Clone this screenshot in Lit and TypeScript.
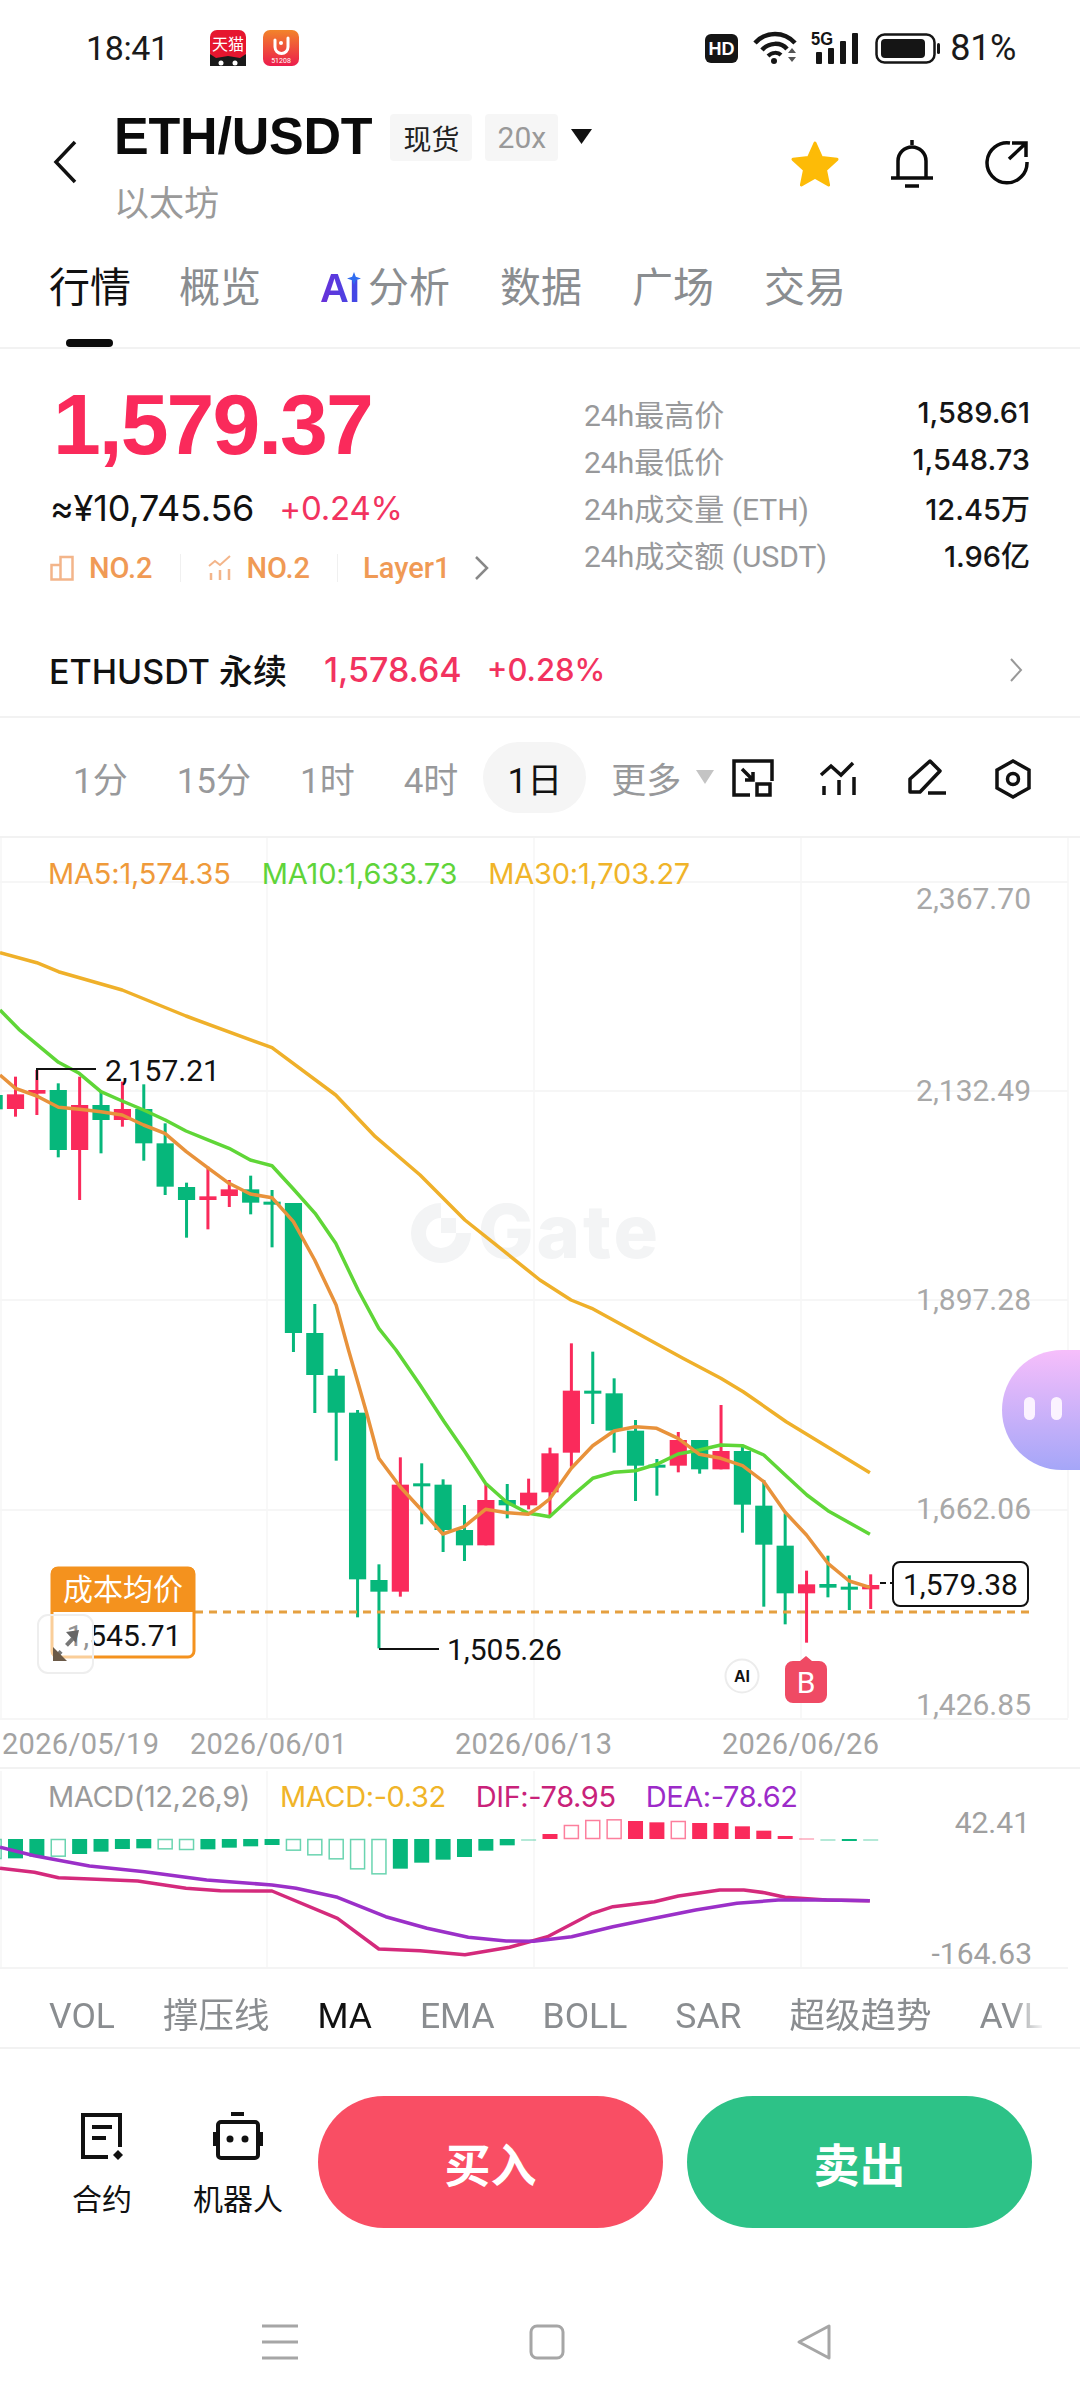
import { LitElement, html, css, svg } from "lit";
import { customElement } from "lit/decorators.js";

const RED = "#FA2A5B";
const GREEN = "#06B77B";
const xAt = (k: number) => 15.5 + 21.38 * (k - 1);

type C = [number, number, number, number, number];
const z3 = (a: number[], r = 0): C => [900 + a[0] / 3, 900 + a[1] / 3, 900 + a[2] / 3, 900 + a[3] / 3, r];
const z4 = (a: number[], r = 0): C => [1350 + a[0] / 3, 1350 + a[1] / 3, 1350 + a[2] / 3, 1350 + a[3] / 3, r];
const z5 = (a: number[], r = 0): C => [1300 + a[0] / 3, 1300 + a[1] / 3, 1300 + a[2] / 3, 1300 + a[3] / 3, r];

const candles: C[] = [
  z3([560, 640, 585, 628]),
  z3([530, 650, 583, 627], 1),
  z3([510, 645, 570, 581], 1),
  z3([550, 772, 570, 750]),
  z3([530, 900, 615, 750], 1),
  z3([575, 760, 615, 660]),
  z3([545, 680, 627, 660], 1),
  z3([553, 782, 627, 730]),
  z3([670, 885, 730, 860]),
  z3([848, 1013, 861, 900]),
  z3([800, 988, 889, 900], 1),
  z3([840, 921, 868, 888], 1),
  z3([827, 943, 868, 908]),
  z3([870, 1042, 905, 911]),
  [1203, 1352, 1203, 1333, 0],
  [1304, 1413, 1333, 1375, 0],
  z4([57, 332, 77, 188]),
  z4([180, 802, 188, 688]),
  z4([643, 895, 690, 725]),
  z4([322, 740, 404, 725], 1),
  z4([340, 523, 400, 407]),
  z4([388, 606, 404, 540]),
  z4([465, 633, 540, 586]),
  z4([400, 586, 450, 586], 1),
  z4([402, 505, 450, 466]),
  z4([386, 478, 428, 466], 1),
  z5([443, 650, 460, 577], 1),
  z5([130, 500, 272, 458], 1),
  z5([155, 372, 272, 278]),
  z5([235, 458, 280, 392]),
  z5([360, 603, 392, 497]),
  z5([477, 587, 494, 500]),
  z5([396, 517, 420, 497], 1),
  z5([420, 521, 420, 508]),
  z5([315, 508, 453, 508], 1),
  z5([435, 698, 453, 614]),
  z5([540, 920, 617, 734]),
  z5([640, 973, 737, 880]),
  z5([812, 1028, 853, 880], 1),
  z5([767, 892, 852, 863]),
  z5([826, 930, 860, 868]),
  z5([823, 927, 855, 868], 1),
];

const pts = (base: number, ox: number, a: number[][]) =>
  a.map(([x, y]) => `${(ox + x / 2.904).toFixed(1)},${(base + y / 3).toFixed(1)}`).join(" ");

const ma30 =
  pts(900, 0, [[0, 158], [107, 188], [170, 215], [355, 270], [540, 348], [790, 443], [975, 585], [1090, 710], [1220, 825], [1350, 960], [1568, 1140]]) +
  " " + pts(1300, 540, [[90, 0], [150, 25], [415, 175], [525, 235], [590, 275], [715, 365], [958, 518]]);
const ma10 =
  pts(900, 0, [[0, 330], [55, 388], [170, 487], [230, 520], [293, 575], [355, 603], [417, 630], [480, 660], [540, 693], [600, 718], [665, 745], [727, 780], [790, 797], [850, 865], [915, 940], [975, 1030], [1040, 1170], [1100, 1285], [1150, 1350]]) +
  " " + pts(1350, 0, [[1220, 105], [1290, 215], [1350, 305], [1410, 400], [1470, 455], [1534, 490], [1568, 495]]) +
  " " + pts(1300, 540, [[28, 650], [91, 590], [153, 535], [215, 517], [277, 512], [339, 493], [401, 462], [463, 450], [525, 435], [588, 437], [650, 465], [712, 525], [775, 585], [836, 632], [958, 703]]);
const ma5 =
  pts(900, 0, [[0, 525], [45, 565], [107, 588], [170, 622], [231, 628], [293, 635], [355, 645], [417, 675], [479, 700], [541, 755], [603, 803], [665, 850], [727, 882], [790, 893], [852, 965], [914, 1080], [976, 1215], [1012, 1350]]) +
  " " + pts(1350, 0, [[1040, 100], [1065, 190], [1100, 325], [1162, 410], [1224, 480], [1286, 552], [1348, 530], [1410, 478], [1472, 488], [1534, 493]]) +
  " " + pts(1300, 540, [[0, 620], [28, 597], [91, 505], [153, 437], [215, 393], [277, 380], [339, 385], [401, 415], [463, 463], [525, 475], [588, 497], [650, 545], [712, 637], [774, 705], [836, 790], [898, 843], [958, 862]]);

// MACD bars: [zoomY, kind] 0 filled, 1 hollow, 2 faint
const bars: [number, number][] = [
  [357, 1], [355, 0], [350, 0], [350, 1], [342, 0], [335, 0], [327, 0], [325, 0], [328, 1], [330, 1], [328, 0], [323, 0], [319, 0], [315, 0],
  [332, 1], [346, 1], [358, 1], [388, 1], [403, 1], [386, 0], [368, 0], [359, 0], [351, 0], [332, 0], [316, 0], [300, 2],
  [282, 0], [255, 1], [240, 1], [238, 1], [243, 0], [247, 0], [243, 1], [249, 0], [249, 0], [259, 0], [272, 0], [288, 0], [294, 2], [299, 2], [301, 0], [299, 2],
];
const zero = 1839;
const linePts = (a: number[][]) => a.map(([x, y]) => `${(x / 1.452).toFixed(1)},${(1740 + y / 3).toFixed(1)}`).join(" ");
const dea = linePts([[0, 322], [50, 347], [130, 378], [210, 395], [300, 420], [395, 435], [430, 445], [490, 472], [560, 530], [620, 565], [680, 592], [735, 603], [775, 604], [830, 590], [890, 560], [950, 535], [1010, 510], [1070, 490], [1130, 480], [1200, 480], [1263, 482]]);
const dif = linePts([[0, 385], [50, 397], [85, 413], [140, 418], [200, 423], [270, 445], [320, 452], [395, 453], [490, 535], [550, 627], [610, 632], [675, 644], [740, 622], [795, 590], [860, 520], [890, 500], [950, 485], [985, 468], [1045, 450], [1080, 450], [1110, 458], [1140, 472], [1200, 480], [1263, 482]]);

const vGrid = [1, 267, 534, 801, 1068];

@customElement("app-root")
export class AppRoot extends LitElement {
  static styles = css`
    :host {
      display: block;
      width: 1080px;
      height: 2408px;
      background: #fff;
      overflow: hidden;
      color: #111;
      font-family: Roboto, "Noto Sans CJK SC", sans-serif;
    }
    svg { display: block; flex: none; overflow: visible; }
    .status { height: 96px; display: flex; align-items: center; padding-left: 86px; }
    .time { font-size: 34px; letter-spacing: -0.4px; color: #1a1a1a; }
    .apps { display: flex; gap: 17px; margin-left: 41px; }
    .status-right { margin-left: auto; display: flex; align-items: center; padding-right: 64px; }
    .pct { font-size: 36px; letter-spacing: -0.4px; margin-left: 9px; color: #1a1a1a; }
    .ml15 { margin-left: 15px; } .ml12 { margin-left: 12px; } .ml17 { margin-left: 16px; }

    .header { height: 134px; display: flex; padding: 0 50px 0 53px; }
    .back { margin-top: 44px; }
    .head-col { margin-left: 37px; padding-top: 12px; }
    .title-row { display: flex; align-items: flex-start; }
    .title { font: 700 52px/56px "Liberation Sans", sans-serif; letter-spacing: -0.2px; color: #0b0b0b; }
    .chip { height: 47px; margin-top: 6px; border-radius: 4px; background: #f6f6f6; display: flex; align-items: center; justify-content: center; font-size: 28px; }
    .chip.spot { width: 82px; margin-left: 18px; color: #222; }
    .chip.lev { width: 73px; margin-left: 13px; color: #999; font-size: 30px; }
    .caret { margin: 21px 0 0 13px; }
    .sub { font-size: 35px; line-height: 40px; margin-top: 21px; color: #9a9a9a; }
    .head-icons { margin-left: auto; display: flex; align-items: flex-start; padding-top: 43px; gap: 50px; }

    .tabs { height: 119px; border-bottom: 2px solid #f2f2f2; box-sizing: border-box; display: flex; padding-left: 49px; gap: 50px; }
    .tab { position: relative; font-size: 41px; line-height: 58px; padding-top: 29px; color: #8a8d90; display: flex; align-items: flex-start; white-space: nowrap; }
    .tab.on { color: #111; }
    .tab.on::after { content: ""; position: absolute; left: 17px; top: 109px; width: 47px; height: 8px; border-radius: 4px; background: #0b0b0b; }
    .tab:nth-child(2) { margin-left: -2px; }
    .tab.with-ai { padding-left: 9px; }
    .ai { font: 700 40px/58px "Liberation Sans", sans-serif; width: 42px; margin-right: 6px; background: linear-gradient(90deg, #6a2fd8, #3d4de8); -webkit-background-clip: text; background-clip: text; color: transparent; }
    .ai-star { position: absolute; left: 36px; top: 42px; }

    .summary { height: 274px; display: flex; padding: 0 50px 0 50px; box-sizing: border-box; }
    .left { width: 534px; }
    .price { font: 700 86px/90px "Liberation Sans", sans-serif; letter-spacing: -2px; color: #FA2A5B; margin: 30px 0 0 3px; }
    .fiat { display: flex; align-items: center; margin-top: 19px; height: 40px; font-family: Inter, sans-serif; font-size: 36px; gap: 25px; letter-spacing: -0.2px; }
    .up { color: #F2335F; font-size: 33px; }
    .tags { display: flex; align-items: center; margin-top: 20px; height: 40px; color: #F09A55; font-size: 29px; font-weight: 500; }
    .tag { display: flex; align-items: center; gap: 15px; }
    .sep { width: 1px; height: 28px; background: #f0f0f0; margin: 0 27px; }
    .layer { margin-left: -2px; }
    .tag-more { margin-left: 24px; }
    .right { flex: 1; padding-top: 40px; }
    .stat { height: 47px; display: flex; align-items: center; justify-content: space-between; }
    .stat span:first-child { font-size: 30px; color: #98999b; }
    .stat span:last-child { font-family: Inter, "Noto Sans CJK SC", sans-serif; font-size: 29px; font-weight: 500; color: #151515; }

    .perp { height: 95px; box-sizing: border-box; border-bottom: 2px solid #f2f2f2; display: flex; align-items: center; padding: 0 56px 0 49px; font-family: Inter, "Noto Sans CJK SC", sans-serif; font-size: 34px; font-weight: 500; }
    .perp .val { color: #F2335F; }
    .perp .a { margin-left: 37px; }
    .perp .b { margin-left: 25px; font-size: 31px; }
    .perp svg { margin-left: auto; }

    .tf { height: 120px; box-sizing: border-box; border-bottom: 2px solid #f2f2f2; display: flex; align-items: center; padding: 0 47px 0 73px; font-size: 35px; color: #98999b; }
    .tf-items { display: flex; align-items: center; gap: 49px; }
    .pill { margin-left: -24px; margin-right: -24px; width: 103px; height: 71px; border-radius: 36px; background: #f5f5f5; color: #111; display: flex; align-items: center; justify-content: center; }
    .more { display: flex; align-items: center; gap: 15px; }
    .tf-icons { display: flex; gap: 47px; margin-left: auto; padding-top: 3px; }

    .chart { position: relative; height: 882px; }
    .legend { position: absolute; display: flex; font-family: Inter, sans-serif; font-size: 29px; line-height: 36px; white-space: nowrap; }
    .legend.ma { left: 48px; top: 18px; gap: 31px; letter-spacing: -0.2px; }
    .c5 { color: #EF9A3A; } .c10 { color: #5FD43A; } .c30 { color: #F0B429; }

    .dates { height: 49px; display: grid; grid-template-columns: 188px 265px 267px 1fr; padding-left: 2px; box-sizing: border-box; border-bottom: 2px solid #f2f2f2; font-size: 29px; line-height: 49px; color: #a3a3a3; letter-spacing: 0.3px; }

    .macd { position: relative; height: 202px; }
    .legend.md { left: 48px; top: 10px; letter-spacing: -0.4px; }
    .legend.md span + span { margin-left: 30px; }
    .m0 { color: #9a9a9a; } .m1 { color: #F0B429; } .m2 { color: #C9227A; } .m3 { color: #9C2BC9; }

    .inds { height: 78px; box-sizing: border-box; border-bottom: 2px solid #f2f2f2; }
    .inds-in { display: flex; gap: 48px; padding: 20px 0 0 49px; font-size: 35.5px; line-height: 50px; color: #8a8d90; white-space: nowrap; -webkit-mask-image: linear-gradient(to right, #000 1010px, transparent 1046px); mask-image: linear-gradient(to right, #000 1010px, transparent 1046px); }
    .inds-in .on { color: #111; }

    .actions { display: flex; padding: 47px 48px 0 52px; align-items: flex-start; }
    .act { width: 100px; padding-top: 16px; margin-right: 36px; display: flex; flex-direction: column; align-items: center; font-size: 30px; line-height: 36px; color: #111; white-space: nowrap; }
    .act:nth-child(2) { margin-right: 0; }
    .act svg { margin-bottom: 22px; }
    .btn { width: 345px; height: 132px; border-radius: 66px; display: flex; align-items: center; justify-content: center; color: #fff; font-size: 46px; font-weight: 700; }
    .buy { background: #F94E64; margin-left: 30px; }
    .sell { background: #2DC287; margin-left: 24px; }

    .nav { display: flex; gap: 231px; padding: 96px 0 0 262px; }
  `;

  private renderChart() {
    return svg`
      ${vGrid.map((x) => svg`<line x1=${x} x2=${x} y1="838" y2="1718" stroke="#f8f8f8" stroke-width="2"></line>`)}
      ${[882, 1091, 1300, 1510, 1719].map((y) => svg`<line x1="0" x2="1068" y1=${y} y2=${y} stroke="#f6f6f6" stroke-width="2"></line>`)}
      <g fill="#f3f4f5">
        <path d="M441 1203a30 30 0 1 0 30 30h-15a15 15 0 1 1-15-15z"></path>
        <rect x="441" y="1218" width="15" height="15"></rect>
        <text x="478" y="1258" font-family="Inter, sans-serif" font-weight="800" font-size="74" textLength="180">Gate</text>
      </g>
      ${candles.map((c, i) => {
        const x = xAt(i);
        const col = c[4] ? RED : GREEN;
        return svg`<rect x=${x - 1.5} y=${c[0]} width="3" height=${c[1] - c[0]} fill=${col}></rect>
          <rect x=${x - 8.6} y=${c[2]} width="17.2" height=${Math.max(c[3] - c[2], 3)} fill=${col}></rect>`;
      })}
      <polyline points=${ma30} fill="none" stroke="#EFB02A" stroke-width="3.5" stroke-linejoin="round"></polyline>
      <polyline points=${ma10} fill="none" stroke="#5FD637" stroke-width="3.5" stroke-linejoin="round"></polyline>
      <polyline points=${ma5} fill="none" stroke="#E8923B" stroke-width="3.5" stroke-linejoin="round"></polyline>

      <line x1="195" x2="1030" y1="1612" y2="1612" stroke="#E5A040" stroke-width="3" stroke-dasharray="8 6"></line>

      <path d="M37 1080V1069H96" fill="none" stroke="#111" stroke-width="2"></path>
      <text x="105" y="1081" font-size="30" fill="#111" font-family="Roboto, sans-serif">2,157.21</text>
      <path d="M379 1649H439" fill="none" stroke="#111" stroke-width="2"></path>
      <text x="447" y="1660" font-size="30" fill="#111" font-family="Roboto, sans-serif">1,505.26</text>

      <g font-family="Roboto, sans-serif" font-size="30" fill="#a8a8a8" text-anchor="end">
        <text x="1031" y="909">2,367.70</text>
        <text x="1031" y="1101">2,132.49</text>
        <text x="1031" y="1310">1,897.28</text>
        <text x="1031" y="1519">1,662.06</text>
        <text x="1031" y="1715">1,426.85</text>
      </g>

      <path d="M880 1583h12" stroke="#111" stroke-width="2" stroke-dasharray="6 4"></path>
      <rect x="893" y="1562" width="135" height="44" rx="7" fill="#fff" stroke="#111" stroke-width="2"></rect>
      <text x="960.5" y="1595" font-family="Roboto, sans-serif" font-size="30" fill="#111" text-anchor="middle">1,579.38</text>

      <rect x="52" y="1568" width="142" height="89" rx="6" fill="#fff" stroke="#F4921E" stroke-width="3"></rect>
      <path d="M51 1612v-39a6 6 0 0 1 6-6h132a6 6 0 0 1 6 6v39z" fill="#F4921E"></path>
      <text x="123" y="1600" font-family="'Noto Sans CJK SC', sans-serif" font-size="30" fill="#fff" text-anchor="middle">成本均价</text>
      <text x="124" y="1646" font-family="Roboto, sans-serif" font-size="30" fill="#111" text-anchor="middle">1,545.71</text>

      <rect x="38" y="1615" width="55" height="58" rx="10" fill="#fff" fill-opacity=".55" stroke="#eeeeee" stroke-width="2"></rect>
      <path d="M55 1658l22-24" stroke="#777" stroke-width="4" stroke-dasharray="9 8"></path>
      <path d="M53 1647v14h14z" fill="#6b5a48"></path>
      <path d="M79 1630l-13 2 10 11z" fill="#666"></path>

      <circle cx="742" cy="1676" r="16.5" fill="#fff" stroke="#ececec" stroke-width="2"></circle>
      <text x="742" y="1682" font-family="'Liberation Sans', sans-serif" font-weight="700" font-size="16" fill="#111" text-anchor="middle">AI</text>

      <path d="M793 1661h7l6-5 6 5h7a8 8 0 0 1 8 8v26a8 8 0 0 1-8 8h-26a8 8 0 0 1-8-8v-26a8 8 0 0 1 8-8z" fill="#EF4A64"></path>
      <text x="806" y="1693" font-family="Roboto, sans-serif" font-size="30" fill="#fff" text-anchor="middle">B</text>

      <defs>
        <linearGradient id="fab" x1="0" y1="0" x2="0" y2="1">
          <stop offset="0" stop-color="#F6BEFB"></stop>
          <stop offset="1" stop-color="#A5A6F8"></stop>
        </linearGradient>
      </defs>
      <path d="M1080 1350h-18a60 60 0 0 0 0 120h18z" fill="url(#fab)"></path>
      <rect x="1024" y="1397" width="11" height="23" rx="5.5" fill="#fbf3ff"></rect>
      <rect x="1051" y="1397" width="11" height="23" rx="5.5" fill="#fbf3ff"></rect>
    `;
  }

  private renderMacd() {
    return svg`
      ${[1, 267, 534, 801].map((x) => svg`<line x1=${x} x2=${x} y1="1771" y2="1968" stroke="#f8f8f8" stroke-width="2"></line>`)}
      <line x1="0" x2="1068" y1="1968" y2="1968" stroke="#f4f4f4" stroke-width="2"></line>
      ${bars.map(([z, kind], i) => {
        const x = xAt(i);
        const y = 1740 + z / 3;
        const top = Math.min(y, zero);
        const h = Math.max(Math.abs(y - zero), 2);
        const col = i >= 26 && i <= 38 ? RED : GREEN;
        if (kind === 0) return svg`<rect x=${x - 7.5} y=${top} width="15" height=${h} fill=${col}></rect>`;
        if (kind === 2) return svg`<rect x=${x - 7.5} y=${top} width="15" height="2" fill=${col} opacity=".3"></rect>`;
        return svg`<rect x=${x - 7} y=${top + 0.5} width="14" height=${h - 1} fill="#fff" stroke=${col} stroke-opacity=".6" stroke-width="1.5"></rect>`;
      })}
      <polyline points=${dif} fill="none" stroke="#D42A7C" stroke-width="3.5" stroke-linejoin="round"></polyline>
      <polyline points=${dea} fill="none" stroke="#9B30C8" stroke-width="3.5" stroke-linejoin="round"></polyline>
      <g font-family="Roboto, sans-serif" font-size="30" fill="#a0a0a0" text-anchor="end">
        <text x="1030" y="1833">42.41</text>
        <text x="1032" y="1964">-164.63</text>
      </g>
    `;
  }

  render() {
    return html`
      <div class="status">
        <span class="time">18:41</span>
        <div class="apps">
          <svg width="36" height="36" viewBox="0 0 36 36">
            <rect width="36" height="30" rx="7" fill="#E6162F"></rect>
            <path d="M0 24l6 4 12-2 12 2 6-4v12H0z" fill="#1a1a1a"></path>
            <text x="18" y="20" font-family="'Noto Sans CJK SC',sans-serif" font-size="16" fill="#fff" text-anchor="middle">天猫</text>
            <circle cx="11" cy="33" r="2.5" fill="#fff"></circle><circle cx="25" cy="33" r="2.5" fill="#fff"></circle>
          </svg>
          <svg width="36" height="36" viewBox="0 0 36 36">
            <defs><linearGradient id="app2" x1="0" y1="0" x2="0" y2="1"><stop offset="0" stop-color="#F2842A"></stop><stop offset="1" stop-color="#EC1C4C"></stop></linearGradient></defs>
            <rect width="36" height="36" rx="7" fill="url(#app2)"></rect>
            <path d="M12 10v7a6.5 6.5 0 0 0 13 0V8" fill="none" stroke="#fff" stroke-width="3" stroke-linecap="round"></path>
            <circle cx="18" cy="13" r="2" fill="#fff"></circle>
            <text x="18" y="33" font-family="Roboto,sans-serif" font-size="7" fill="#fff" text-anchor="middle">51208</text>
          </svg>
        </div>
        <div class="status-right">
          <svg width="33" height="29" viewBox="0 0 33 29"><rect width="33" height="29" rx="6" fill="#151515"></rect><text x="16.5" y="21" font-family="'Liberation Sans',sans-serif" font-weight="700" font-size="18" fill="#fff" text-anchor="middle">HD</text></svg>
          <svg class="ml15" width="46" height="34" viewBox="0 0 46 34">
            <path d="M2 12C13 0 31 0 42 12" fill="none" stroke="#151515" stroke-width="4.5"></path>
            <path d="M9 19C16 11 28 11 34 18" fill="none" stroke="#151515" stroke-width="4.5"></path>
            <path d="M15 25C19 21 25 21 28 24" fill="none" stroke="#151515" stroke-width="4"></path>
            <circle cx="21" cy="30" r="3" fill="#151515"></circle>
            <path d="M35 22l4-5 4 5zM35 26h8l-4 5z" fill="#555"></path>
          </svg>
          <svg class="ml12" width="48" height="34" viewBox="0 0 48 34">
            <text x="0" y="14" font-family="'Liberation Sans',sans-serif" font-weight="700" font-size="18" fill="#151515" textLength="22" lengthAdjust="spacingAndGlyphs">5G</text>
            <rect x="5" y="21" width="6" height="12" rx="1" fill="#151515"></rect>
            <rect x="17" y="17" width="6" height="16" rx="1" fill="#151515"></rect>
            <rect x="29" y="10" width="6" height="23" rx="1" fill="#151515"></rect>
            <rect x="41" y="2" width="6" height="31" rx="1" fill="#151515"></rect>
          </svg>
          <svg class="ml17" width="66" height="31" viewBox="0 0 66 31">
            <rect x="1.5" y="1.5" width="58" height="28" rx="8" fill="none" stroke="#151515" stroke-width="2.5"></rect>
            <rect x="6" y="6" width="44" height="19" rx="4" fill="#151515"></rect>
            <rect x="62" y="10" width="3" height="11" rx="1.5" fill="#151515"></rect>
          </svg>
          <span class="pct">81%</span>
        </div>
      </div>

      <div class="header">
        <svg class="back" width="24" height="44" viewBox="0 0 24 44"><path d="M22 2L3 22l19 20" fill="none" stroke="#111" stroke-width="3.5"></path></svg>
        <div class="head-col">
          <div class="title-row">
            <span class="title">ETH/USDT</span>
            <span class="chip spot">现货</span>
            <span class="chip lev">20x</span>
            <svg class="caret" width="21" height="15" viewBox="0 0 21 15"><path d="M0 0h21L10.5 15z" fill="#111"></path></svg>
          </div>
          <div class="sub">以太坊</div>
        </div>
        <div class="head-icons">
          <svg width="50" height="48" viewBox="0 0 50 48"><path d="M25 4l6.5 14.5 15.5 1.8-11.5 10.6 3.1 15.1L25 38.2 11.4 46l3.1-15.1L3 20.3l15.5-1.8z" fill="#FDBB07" stroke="#FDBB07" stroke-width="3" stroke-linejoin="round"></path></svg>
          <svg width="44" height="50" viewBox="0 0 44 50"><path d="M22 1v5M8 38V22a14 14 0 0 1 28 0v16M1 39h42M15 47h14" fill="none" stroke="#0b0b0b" stroke-width="3.5"></path></svg>
          <svg width="46" height="46" viewBox="0 0 46 46"><path d="M26 4A20 20 0 1 0 43 23" fill="none" stroke="#0b0b0b" stroke-width="3.5"></path><path d="M25 20L41 5M28 4h14v14" fill="none" stroke="#0b0b0b" stroke-width="3.5"></path></svg>
        </div>
      </div>

      <div class="tabs">
        <span class="tab on">行情</span>
        <span class="tab">概览</span>
        <span class="tab with-ai"><span class="ai">Aı</span><svg class="ai-star" width="14" height="13" viewBox="0 0 14 13"><path d="M7 0l1.8 4.7L14 6.5 8.8 8.3 7 13 5.2 8.3 0 6.5l5.2-1.800z" fill="#2F6CF0"></path></svg>分析</span>
        <span class="tab">数据</span>
        <span class="tab">广场</span>
        <span class="tab">交易</span>
      </div>

      <div class="summary">
        <div class="left">
          <div class="price">1,579.37</div>
          <div class="fiat"><span>≈¥10,745.56</span><span class="up">+0.24%</span></div>
          <div class="tags">
            <span class="tag"><svg width="24" height="26" viewBox="0 0 24 26"><path d="M1.5 10h9v14.5h-9zM10.5 24.5V2h12v22.5z" fill="none" stroke="#F3B58A" stroke-width="2.5"></path></svg>NO.2</span>
            <span class="sep"></span>
            <span class="tag"><svg width="24" height="26" viewBox="0 0 24 26"><path d="M1 11l6-5 5 4 10-9" fill="none" stroke="#F3B58A" stroke-width="2"></path><path d="M3 18v7M12 15v10M21 14v11" stroke="#F3B58A" stroke-width="2.5"></path></svg>NO.2</span>
            <span class="sep"></span>
            <span class="layer">Layer1</span>
            <svg class="tag-more" width="15" height="26" viewBox="0 0 15 26"><path d="M2 2l11 11L2 24" fill="none" stroke="#888" stroke-width="2.5"></path></svg>
          </div>
        </div>
        <div class="right">
          <div class="stat"><span>24h最高价</span><span>1,589.61</span></div>
          <div class="stat"><span>24h最低价</span><span>1,548.73</span></div>
          <div class="stat"><span>24h成交量 (ETH)</span><span>12.45万</span></div>
          <div class="stat"><span>24h成交额 (USDT)</span><span>1.96亿</span></div>
        </div>
      </div>

      <div class="perp">
        <span>ETHUSDT 永续</span>
        <span class="val a">1,578.64</span>
        <span class="val b">+0.28%</span>
        <svg width="16" height="26" viewBox="0 0 16 26"><path d="M3 2l10 11L3 24" fill="none" stroke="#999" stroke-width="2"></path></svg>
      </div>

      <div class="tf">
        <div class="tf-items">
          <span>1分</span><span>15分</span><span>1时</span><span>4时</span>
          <span class="pill">1日</span>
          <span class="more">更多<svg width="18" height="14" viewBox="0 0 18 14"><path d="M0 0h18L9 14z" fill="#c4c4c4"></path></svg></span>
        </div>
        <div class="tf-icons">
          <svg width="40" height="38" viewBox="0 0 40 38"><path d="M18 36H2V2h38v20" fill="none" stroke="#111" stroke-width="3.5"></path><path d="M10 10l11 11M21 13v8h-8" fill="none" stroke="#111" stroke-width="3.5"></path><rect x="25" y="25" width="13" height="11" fill="none" stroke="#111" stroke-width="3.5"></rect></svg>
          <svg width="40" height="38" viewBox="0 0 40 38"><path d="M2 16l10-9 10 9L34 4" fill="none" stroke="#111" stroke-width="3.5"></path><path d="M5 27v9M20 21v15M35 18v18" stroke="#111" stroke-width="3.5"></path></svg>
          <svg width="40" height="38" viewBox="0 0 40 38"><path d="M4 20L24 2l10 10-20 21H4z" fill="none" stroke="#111" stroke-width="3.5" stroke-linejoin="round"></path><path d="M22 34h18" stroke="#111" stroke-width="3.5"></path></svg>
          <svg width="40" height="40" viewBox="0 0 40 40"><path d="M20 2l16 9v18l-16 9-16-9V11z" fill="none" stroke="#111" stroke-width="3.5"></path><circle cx="20" cy="20" r="5.5" fill="none" stroke="#111" stroke-width="3.5"></circle></svg>
        </div>
      </div>

      <div class="chart">
        <svg width="1080" height="882" viewBox="0 838 1080 882">${this.renderChart()}</svg>
        <div class="legend ma">
          <span class="c5">MA5:1,574.35</span><span class="c10">MA10:1,633.73</span><span class="c30">MA30:1,703.27</span>
        </div>
      </div>

      <div class="dates"><span>2026/05/19</span><span>2026/06/01</span><span>2026/06/13</span><span>2026/06/26</span></div>

      <div class="macd">
        <svg width="1080" height="202" viewBox="0 1769 1080 202">${this.renderMacd()}</svg>
        <div class="legend md">
          <span class="m0">MACD(12,26,9)</span><span class="m1">MACD:-0.32</span><span class="m2">DIF:-78.95</span><span class="m3">DEA:-78.62</span>
        </div>
      </div>

      <div class="inds">
        <div class="inds-in">
          <span>VOL</span><span>撑压线</span><span class="on">MA</span><span>EMA</span><span>BOLL</span><span>SAR</span><span>超级趋势</span><span>AVL</span>
        </div>
      </div>

      <div class="actions">
        <div class="act">
          <svg width="44" height="48" viewBox="0 0 44 48"><path d="M28 45H3V3h37v32M12 15h20M12 26h14" fill="none" stroke="#111" stroke-width="4"></path><path d="M38 38l5 5-5 5-5-5z" fill="#111"></path></svg>
          <span>合约</span>
        </div>
        <div class="act">
          <svg width="50" height="48" viewBox="0 0 50 48"><rect x="18" y="0" width="13" height="4" fill="#111"></rect><rect x="5" y="10" width="40" height="36" rx="3" fill="none" stroke="#111" stroke-width="4"></rect><rect x="0" y="20" width="4" height="14" fill="#111"></rect><rect x="46" y="20" width="4" height="14" fill="#111"></rect><circle cx="17" cy="27" r="3.5" fill="#111"></circle><circle cx="32" cy="27" r="3.5" fill="#111"></circle></svg>
          <span>机器人</span>
        </div>
        <div class="btn buy">买入</div>
        <div class="btn sell">卖出</div>
      </div>

      <div class="nav">
        <svg width="36" height="36" viewBox="0 0 36 36"><path d="M0 2h36M0 18h36M0 34h36" stroke="#a6a6a6" stroke-width="3"></path></svg>
        <svg width="36" height="36" viewBox="0 0 36 36"><rect x="2" y="2" width="32" height="32" rx="6" fill="none" stroke="#a6a6a6" stroke-width="3"></rect></svg>
        <svg width="36" height="36" viewBox="0 0 36 36"><path d="M33 2v32L3 18z" fill="none" stroke="#a6a6a6" stroke-width="3" stroke-linejoin="round"></path></svg>
      </div>
    `;
  }
}
